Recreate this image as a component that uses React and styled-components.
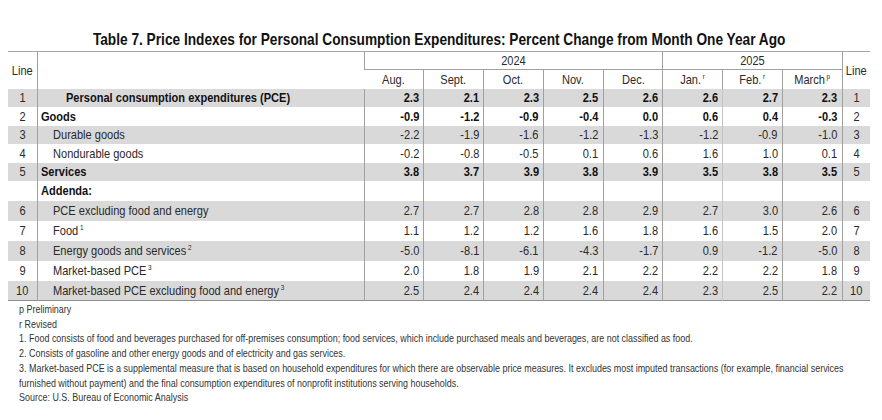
import React from "react";
import styled, { createGlobalStyle } from "styled-components";

const Global = createGlobalStyle`
  html, body { margin: 0; padding: 0; background: #fff; overflow: hidden; }
  body { font-family: "Liberation Sans", Arial, sans-serif; color: #1a1a1a; }
`;

const Page = styled.div`
  width: 882px;
  padding: 29px 0 0 8px;
  box-sizing: border-box;
  overflow: hidden;
`;

const Title = styled.h1`
  width: 862px;
  margin: 0 0 1px;
  display: flex;
  justify-content: center;
  font-size: 17px;
  line-height: 21px;
  font-weight: bold;
  color: #111;
  white-space: nowrap;
`;

const Narrow = styled.span`
  display: inline-block;
  white-space: nowrap;
  transform: scaleX(${(p) => p.$k || 0.85});
  transform-origin: ${(p) => p.$origin || "center"};
`;

const Table = styled.table`
  width: 862px;
  border-collapse: collapse;
  table-layout: fixed;
  font-size: 13px;
  border-top: 1px solid #a6a6a6;
  border-bottom: 1px solid #8c8c8c;
`;

const HeadCell = styled.th`
  font-weight: normal;
  padding: 0;
  text-align: center;
  vertical-align: middle;
  color: #2a2a2a;
  border-left: 1px solid #a0a0a0;
  border-bottom: ${(p) => (p.$under ? "1px solid #a0a0a0" : "none")};
  &:first-child { border-left: none; }
`;

const Sup = styled.sup`
  font-size: 7.5px;
  vertical-align: 5px;
  line-height: 0;
  margin-left: 2px;
  font-weight: normal;
`;

const Row = styled.tr`
  height: ${(p) => p.$h}px;
  background: ${(p) => (p.$shade ? "#d9d9d9" : "#fff")};
  font-weight: ${(p) => (p.$bold ? "bold" : "normal")};
  color: ${(p) => (p.$bold ? "#111" : "#2a2a2a")};
`;

const LineCell = styled.td`
  padding: 0;
  text-align: center;
  font-weight: normal;
  color: #2a2a2a;
  border-left: ${(p) => (p.$right ? "1px solid #a0a0a0" : "none")};
`;

const LabelCell = styled.td`
  padding: 0 0 0 ${(p) => p.$indent + 3}px;
  text-align: left;
  border-left: 1px solid #a0a0a0;
  white-space: nowrap;
`;

const ValueCell = styled.td`
  padding: 0 4px 0 0;
  text-align: right;
  white-space: nowrap;
  border-left: 1px solid ${(p) => (p.$light ? "#c4c4c4" : "#a0a0a0")};
`;

const Notes = styled.div`
  padding: 1px 0 0 13px;
  font-size: 10.5px;
  line-height: 14.7px;
  color: #333;
  transform: scaleX(0.852);
  transform-origin: left top;
`;

const Note = styled.div`
  white-space: nowrap;
`;

const months = [
  { m: "Aug." },
  { m: "Sept." },
  { m: "Oct." },
  { m: "Nov." },
  { m: "Dec." },
  { m: "Jan.", s: "r" },
  { m: "Feb.", s: "r" },
  { m: "March", s: "p" },
];

const rows = [
  { n: "1", label: "Personal consumption expenditures (PCE)", indent: 25, bold: true, v: ["2.3", "2.1", "2.3", "2.5", "2.6", "2.6", "2.7", "2.3"] },
  { n: "2", label: "Goods", indent: 0, bold: true, v: ["-0.9", "-1.2", "-0.9", "-0.4", "0.0", "0.6", "0.4", "-0.3"] },
  { n: "3", label: "Durable goods", indent: 12, v: ["-2.2", "-1.9", "-1.6", "-1.2", "-1.3", "-1.2", "-0.9", "-1.0"] },
  { n: "4", label: "Nondurable goods", indent: 12, v: ["-0.2", "-0.8", "-0.5", "0.1", "0.6", "1.6", "1.0", "0.1"] },
  { n: "5", label: "Services", indent: 0, bold: true, v: ["3.8", "3.7", "3.9", "3.8", "3.9", "3.5", "3.8", "3.5"] },
  { n: "", label: "Addenda:", indent: 0, bold: true, v: ["", "", "", "", "", "", "", ""] },
  { n: "6", label: "PCE excluding food and energy", indent: 12, v: ["2.7", "2.7", "2.8", "2.8", "2.9", "2.7", "3.0", "2.6"] },
  { n: "7", label: "Food", sup: "1", indent: 12, v: ["1.1", "1.2", "1.2", "1.6", "1.8", "1.6", "1.5", "2.0"] },
  { n: "8", label: "Energy goods and services", sup: "2", indent: 12, v: ["-5.0", "-8.1", "-6.1", "-4.3", "-1.7", "0.9", "-1.2", "-5.0"] },
  { n: "9", label: "Market-based PCE", sup: "3", indent: 12, v: ["2.0", "1.8", "1.9", "2.1", "2.2", "2.2", "2.2", "1.8"] },
  { n: "10", label: "Market-based PCE excluding food and energy", sup: "3", indent: 12, v: ["2.5", "2.4", "2.4", "2.4", "2.4", "2.3", "2.5", "2.2"] },
];

const shaded = [true, false, true, false, true, false, true, false, true, false, true];
const heights = [18.5, 18.5, 18.5, 18.5, 18.5, 19.5, 20, 20, 20, 20, 20];

export default function App() {
  return (
    <Page>
      <Global />
      <Title>
        <Narrow $k={0.805}>
          Table 7. Price Indexes for Personal Consumption Expenditures: Percent Change from Month One Year Ago
        </Narrow>
      </Title>
      <Table>
        <colgroup>
          <col style={{ width: 29 }} />
          <col style={{ width: 327 }} />
          {months.map((m) => (
            <col key={m.m} style={{ width: 59.75 }} />
          ))}
          <col style={{ width: 28 }} />
        </colgroup>
        <thead>
          <tr style={{ height: 18 }}>
            <HeadCell rowSpan={2}><Narrow>Line</Narrow></HeadCell>
            <HeadCell rowSpan={2} />
            <HeadCell colSpan={5} $under><Narrow>2024</Narrow></HeadCell>
            <HeadCell colSpan={3} $under><Narrow>2025</Narrow></HeadCell>
            <HeadCell rowSpan={2}><Narrow>Line</Narrow></HeadCell>
          </tr>
          <tr style={{ height: 19 }}>
            {months.map((m) => (
              <HeadCell key={m.m}>
                <Narrow>
                  {m.m}
                  {m.s && <Sup>{m.s}</Sup>}
                </Narrow>
              </HeadCell>
            ))}
          </tr>
        </thead>
        <tbody>
          {rows.map((r, i) => (
            <Row key={i} $h={heights[i]} $shade={shaded[i]} $bold={r.bold}>
              <LineCell><Narrow>{r.n}</Narrow></LineCell>
              <LabelCell $indent={r.indent}>
                <Narrow $origin="left">
                  {r.label}
                  {r.sup && <Sup>{r.sup}</Sup>}
                </Narrow>
              </LabelCell>
              {r.v.map((v, j) => (
                <ValueCell key={j} $light={j === 6}>
                  <Narrow $origin="right">{v}</Narrow>
                </ValueCell>
              ))}
              <LineCell $right><Narrow>{r.n}</Narrow></LineCell>
            </Row>
          ))}
        </tbody>
      </Table>
      <Notes>
        <Note>p Preliminary</Note>
        <Note>r Revised</Note>
        <Note>1. Food consists of food and beverages purchased for off-premises consumption; food services, which include purchased meals and beverages, are not classified as food.</Note>
        <Note>2. Consists of gasoline and other energy goods and of electricity and gas services.</Note>
        <Note>3. Market-based PCE is a supplemental measure that is based on household expenditures for which there are observable price measures. It excludes most imputed transactions (for example, financial services</Note>
        <Note>furnished without payment) and the final consumption expenditures of nonprofit institutions serving households.</Note>
        <Note>Source: U.S. Bureau of Economic Analysis</Note>
      </Notes>
    </Page>
  );
}
